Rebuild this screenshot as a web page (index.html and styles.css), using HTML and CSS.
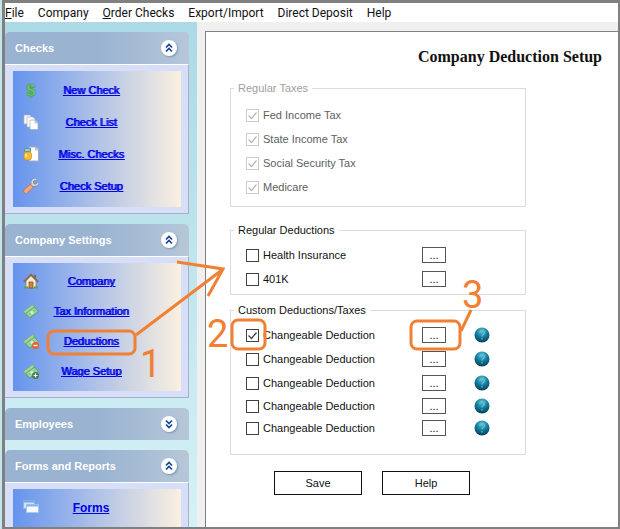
FILE: index.html
```html
<!DOCTYPE html>
<html lang="en">
<head>
    <meta charset="utf-8">
    <title>Company Deduction Setup</title>
    <link rel="stylesheet" href="styles.css">
</head>
<body>
<svg class="defs" width="0" height="0">
    <defs>
        <radialGradient id="orb-fill" cx="0.5" cy="0.25" r="0.75">
            <stop offset="0" stop-color="#5cc4d8"/>
            <stop offset="0.5" stop-color="#12809f"/>
            <stop offset="1" stop-color="#063c5a"/>
        </radialGradient>
        <symbol id="up" viewBox="0 0 16 16">
            <path d="M5 7.5l3-3 3 3M5 11.5l3-3 3 3" fill="none" stroke="#15459c" stroke-width="1.7"/>
        </symbol>
        <symbol id="down" viewBox="0 0 16 16">
            <path d="M5 4.5l3 3 3-3M5 8.5l3 3 3-3" fill="none" stroke="#15459c" stroke-width="1.7"/>
        </symbol>
        <symbol id="orb" viewBox="0 0 16 16">
            <circle cx="8" cy="8" r="7.5" fill="url(#orb-fill)"/>
            <path d="M5.8 6c0-3 4.6-3 4.6-.3C10.4 7.5 8 7.5 8 9.6M8 11v1.5" fill="none" stroke="#6cbcd2" stroke-width="1.2"/>
        </symbol>
        <symbol id="money" viewBox="0 0 16 16">
            <path d="M0.5 8.5L9.5 1.5l3 4-9 7z" fill="#a5d59f" stroke="#6cab72" stroke-width="0.8"/>
            <path d="M2.5 10.5l9-6.5 4 4.5-9 6.500z" fill="#84c788" stroke="#569a66" stroke-width="0.8"/>
            <path d="M4.5 10.7l7-5 2.2 2.5-7 5z" fill="none" stroke="#b5e0b0" stroke-width="0.8"/>
            <circle cx="9" cy="9.5" r="1.7" fill="#d0edc9"/>
        </symbol>
    </defs>
</svg>

<div class="window">
    <nav class="menu">
        <a href="#"><u>F</u>ile</a>
        <a href="#">Company</a>
        <a href="#"><u>O</u>rder Checks</a>
        <a href="#">Export/Import</a>
        <a href="#">Direct Deposit</a>
        <a href="#">Help</a>
    </nav>

    <div class="workspace">
        <aside class="sidebar">
            <section class="group">
                <h2 class="group-title">Checks
                    <button class="toggle" type="button" aria-label="Collapse Checks"><svg><use href="#up"/></svg></button>
                </h2>
                <div class="group-body">
                    <ul class="links roomy">
                        <li>
                            <svg class="icon" viewBox="0 0 16 16"><text class="dollar" x="8" y="14">$</text></svg>
                            <a href="#">New Check</a>
                        </li>
                        <li>
                            <svg class="icon" viewBox="0 0 16 16"><g fill="#fff" stroke="#a5aab5" stroke-width="0.7"><path d="M1 1h6l1 1v8H1z"/><path d="M4 3h6l2 2v8H4z"/><path d="M7 6h5l3 3v6.5H7z"/><path d="M12 6v3h3" fill="#dde"/></g></svg>
                            <a href="#">Check List</a>
                        </li>
                        <li>
                            <svg class="icon" viewBox="0 0 16 16"><path d="M6 1h7l2.5 2.5V15H6z" fill="#fff" stroke="#aab"/><path d="M12.5 1v3h3" fill="#cce" stroke="#99a" stroke-width="0.5"/><path d="M1 2h7v4H1z" fill="#5b93a2"/><path d="M2 3l5 2M7 3L2 5" stroke="#bcd6a0"/><rect x="1" y="6" width="7.5" height="8" rx="2.5" fill="#f5bd3a" stroke="#c98a25" stroke-width="0.7"/><path d="M3 8v3" stroke="#fff0a8" stroke-width="1.5"/></svg>
                            <a href="#">Misc. Checks</a>
                        </li>
                        <li>
                            <svg class="icon" viewBox="0 0 16 16"><path d="M8 8.500l2.500-3" stroke="#7f8991" stroke-width="3.500"/><path d="M13.500 1.200A3 3 0 1 0 15.300 5" fill="none" stroke="#7f8991" stroke-width="3"/><path d="M8 8.500l2.500-3" stroke="#d4d9dc" stroke-width="2"/><path d="M13.300 1.500A3 3 0 1 0 15 5" fill="none" stroke="#d4d9dc" stroke-width="1.600"/><path d="M2.800 13.200L7.500 9" stroke="#cc7548" stroke-width="4.800" stroke-linecap="round"/><path d="M2.800 13.200L7.500 9" stroke="#f3a981" stroke-width="3.400" stroke-linecap="round"/></svg>
                            <a href="#">Check Setup</a>
                        </li>
                    </ul>
                </div>
            </section>

            <section class="group">
                <h2 class="group-title">Company Settings
                    <button class="toggle" type="button" aria-label="Collapse Company Settings"><svg><use href="#up"/></svg></button>
                </h2>
                <div class="group-body">
                    <ul class="links">
                        <li>
                            <svg class="icon" viewBox="0 0 16 16"><path d="M11 2h2v4h-2z" fill="#a35a48"/><path d="M3 7l5-5 5 5v8H3z" fill="#f3ead2" stroke="#8a8275" stroke-width="0.7"/><path d="M0.8 9L8 1.8 15.2 9" fill="none" stroke="#8a6a50" stroke-width="1.8"/><path d="M6 9h4v6H6z" fill="#cf8441" stroke="#7d4b28" stroke-width="0.7"/><path d="M1 14.5h4M11 14.5h4" stroke="#58a452" stroke-width="2"/></svg>
                            <a href="#">Company</a>
                        </li>
                        <li>
                            <svg class="icon" viewBox="0 0 16 16"><use href="#money"/></svg>
                            <a href="#">Tax Information</a>
                        </li>
                        <li>
                            <svg class="icon" viewBox="0 0 16 16"><use href="#money"/><circle cx="12.5" cy="12.5" r="3.5" fill="#e5612a"/><path d="M10.5 12.5h4" stroke="#fff" stroke-width="1.4"/></svg>
                            <a href="#">Deductions</a>
                        </li>
                        <li>
                            <svg class="icon" viewBox="0 0 16 16"><use href="#money"/><circle cx="12.5" cy="12.5" r="3.5" fill="#427f4b"/><path d="M10.5 12.5h4M12.5 10.5v4" stroke="#fff" stroke-width="1.2"/></svg>
                            <a href="#">Wage Setup</a>
                        </li>
                    </ul>
                </div>
            </section>

            <section class="group">
                <h2 class="group-title">Employees
                    <button class="toggle" type="button" aria-label="Expand Employees"><svg><use href="#down"/></svg></button>
                </h2>
            </section>

            <section class="group">
                <h2 class="group-title">Forms and Reports
                    <button class="toggle" type="button" aria-label="Collapse Forms and Reports"><svg><use href="#up"/></svg></button>
                </h2>
                <div class="group-body">
                    <ul class="links roomy strong">
                        <li>
                            <svg class="icon" viewBox="0 0 16 16"><path d="M0.5 0.5h11v8h-11z" fill="#cfe2fa" stroke="#8fb6e0"/><path d="M0.5 0.5h11v2h-11z" fill="#72a7df"/><path d="M3.5 4.5h12v8h-12z" fill="#f6faff" stroke="#a9c9ec"/><path d="M3.5 4.5h12v2h-12z" fill="#82b4e6"/></svg>
                            <a href="#">Forms</a>
                        </li>
                    </ul>
                </div>
            </section>
        </aside>

        <main class="content">
            <h1>Company Deduction Setup</h1>
            <form>
                <fieldset class="taxes" disabled>
                    <legend>Regular Taxes</legend>
                    <div class="row"><label><input type="checkbox" checked>Fed Income Tax</label></div>
                    <div class="row"><label><input type="checkbox" checked>State Income Tax</label></div>
                    <div class="row"><label><input type="checkbox" checked>Social Security Tax</label></div>
                    <div class="row"><label><input type="checkbox" checked>Medicare</label></div>
                </fieldset>

                <fieldset class="regular">
                    <legend>Regular Deductions</legend>
                    <div class="row">
                        <label><input type="checkbox">Health Insurance</label>
                        <button class="more" type="button">...</button>
                    </div>
                    <div class="row">
                        <label><input type="checkbox">401K</label>
                        <button class="more" type="button">...</button>
                    </div>
                </fieldset>

                <fieldset class="custom">
                    <legend>Custom Deductions/Taxes</legend>
                    <div class="row">
                        <label><input type="checkbox" checked>Changeable Deduction</label>
                        <button class="more" type="button">...</button>
                        <button class="info" type="button" aria-label="Help"><svg><use href="#orb"/></svg></button>
                    </div>
                    <div class="row">
                        <label><input type="checkbox">Changeable Deduction</label>
                        <button class="more" type="button">...</button>
                        <button class="info" type="button" aria-label="Help"><svg><use href="#orb"/></svg></button>
                    </div>
                    <div class="row">
                        <label><input type="checkbox">Changeable Deduction</label>
                        <button class="more" type="button">...</button>
                        <button class="info" type="button" aria-label="Help"><svg><use href="#orb"/></svg></button>
                    </div>
                    <div class="row short">
                        <label><input type="checkbox">Changeable Deduction</label>
                        <button class="more" type="button">...</button>
                        <button class="info" type="button" aria-label="Help"><svg><use href="#orb"/></svg></button>
                    </div>
                    <div class="row short">
                        <label><input type="checkbox">Changeable Deduction</label>
                        <button class="more" type="button">...</button>
                        <button class="info" type="button" aria-label="Help"><svg><use href="#orb"/></svg></button>
                    </div>
                </fieldset>

                <div class="actions">
                    <button type="button">Save</button>
                    <button type="button">Help</button>
                </div>
            </form>
        </main>
    </div>
</div>

<!-- numbered steps drawn over the window -->
<svg class="steps" width="620" height="529" viewBox="0 0 620 529">
    <rect x="48" y="331" width="87" height="23" rx="6"/>
    <path d="M136 335L222 270M177 262L223 269L208 296"/>
    <rect x="232" y="320" width="33" height="29" rx="6"/>
    <rect x="411" y="321" width="49" height="28" rx="6"/>
    <path d="M471 310L461 331"/>
    <text x="140" y="377">1</text>
    <text x="207" y="347">2</text>
    <text x="462" y="308">3</text>
</svg>
</body>
</html>
```
FILE: styles.css
```css
* {
    box-sizing: border-box;
}

body {
    margin: 0;
    background: #c4e5ee;
    font-family: "Liberation Sans", sans-serif;
    font-size: 11px;
    color: #111;
}

button {
    padding: 0;
    font: inherit;
    color: inherit;
}

.defs {
    position: absolute;
}

.window {
    display: flex;
    flex-direction: column;
    height: 100vh;
    margin-left: 2px;
    border: solid #808080;
    border-width: 3px 2px 2px 3px;
    background: #f0f0f0;
    overflow: hidden;
}

.menu {
    display: flex;
    flex: none;
    gap: 14px;
    height: 19px;
    line-height: 21px;
    background: #fff;
    font-family: Roboto, sans-serif;
    font-size: 12px;
}

.menu a {
    color: #111;
    text-decoration: none;
    white-space: nowrap;
}

.workspace {
    display: flex;
    flex: 1;
    min-height: 0;
}

/* sidebar */
.sidebar {
    display: flex;
    flex: none;
    flex-direction: column;
    gap: 10px;
    width: 192px;
    padding: 10px 8px 0 0;
    background: linear-gradient(#acd9e6, #d5f2f6);
    overflow: hidden;
}

.group {
    flex: none;
}

.group-title {
    display: flex;
    align-items: center;
    justify-content: space-between;
    height: 32px;
    margin: 0;
    padding: 0 12px 0 10px;
    border-radius: 5px 5px 0 0;
    background: linear-gradient(to right, #99b3d1 50%, #b7c7d8);
    color: #fff;
    font-size: 11px;
}

.toggle {
    width: 16px;
    height: 16px;
    border: 0;
    border-radius: 50%;
    background: #fff;
    box-shadow: 1px 1px 2px #7f93ad;
}

.toggle svg,
.info svg {
    display: block;
    width: 16px;
    height: 16px;
}

.group-body {
    padding: 6px 7px 6px 8px;
    border: 1px solid #a9b0c4;
    border-top-color: #fff;
    border-left: 0;
    background: #d6dff7;
}

.links {
    margin: 0;
    padding: 3px 0 5px;
    list-style: none;
    background: linear-gradient(to right, #6594ee, #fbf0e0);
}

.links li {
    display: flex;
    align-items: center;
    height: 30px;
    padding: 0 38px 0 10px;
}

.links.roomy li {
    height: 32px;
}

.icon {
    flex: none;
    width: 16px;
    height: 16px;
}

.dollar {
    fill: #7fd07c;
    stroke: #4fa85e;
    stroke-width: 1px;
    font-size: 16px;
    font-weight: bold;
    text-anchor: middle;
}

.links a {
    flex: 1;
    color: #0000e6;
    text-align: center;
    text-shadow: 1px 0 #0000e6;
    white-space: nowrap;
}

.links.strong a {
    font-size: 12px;
    font-weight: bold;
    text-shadow: none;
}

/* setup form */
.content {
    flex: 1;
    margin: 9px 0 0 8px;
    padding: 16px 16px 0 24px;
    border: solid #808080;
    border-width: 1px 0 0 1px;
    background: #fff;
}

h1 {
    margin: 0 0 14px;
    font: bold 16px/18px "Liberation Serif", serif;
    text-align: right;
}

fieldset {
    min-width: 0;
    margin: 0 76px 0 0;
    padding: 5px 15px 3px;
    border: 1px solid #dcdcdc;
}

legend {
    height: 16px;
    margin-left: -12px;
    padding: 0 4px;
    line-height: 16px;
}

.taxes {
    margin-bottom: 15px;
    padding-top: 7px;
    padding-bottom: 7px;
    color: #606060;
}

.taxes legend {
    color: #a0a0a0;
}

.regular {
    margin-bottom: 7px;
}

.custom {
    padding-bottom: 15px;
}

.row {
    display: grid;
    grid-template-columns: 176px 52px 16px;
    align-items: center;
    height: 24px;
}

.row.short {
    height: 22px;
}

.row label {
    display: flex;
    align-items: center;
    gap: 4px;
}

input[type="checkbox"] {
    appearance: none;
    width: 13px;
    height: 13px;
    margin: 0;
    border: 1px solid #404040;
    background: #fff;
}

input[type="checkbox"]:checked {
    background: url("data:image/svg+xml,%3Csvg xmlns='http://www.w3.org/2000/svg' viewBox='0 0 11 11'%3E%3Cpath d='M1.5 5.5l3 3 5-6' fill='none' stroke='%23404040' stroke-width='1.3'/%3E%3C/svg%3E") center / 11px no-repeat;
}

input[type="checkbox"]:disabled {
    border-color: #ccc;
    background-image: url("data:image/svg+xml,%3Csvg xmlns='http://www.w3.org/2000/svg' viewBox='0 0 11 11'%3E%3Cpath d='M1.5 5.5l3 3 5-6' fill='none' stroke='%23b8b8b8' stroke-width='1.3'/%3E%3C/svg%3E");
}

.more {
    width: 24px;
    height: 16px;
    border: 1px solid #555;
    background: #fff;
    line-height: 14px;
}

.info {
    width: 16px;
    height: 16px;
    border: 0;
    background: none;
}

.actions {
    display: flex;
    gap: 20px;
    margin: 16px 0 0 44px;
}

.actions button {
    width: 88px;
    height: 24px;
    border: 1px solid #111;
    background: #fff;
}

.steps {
    position: absolute;
    top: 0;
    left: 0;
    fill: none;
    stroke: #f08033;
    stroke-width: 3px;
    pointer-events: none;
}

.steps text {
    fill: #f08033;
    stroke: none;
    font-family: Roboto, sans-serif;
    font-size: 38px;
}
```
